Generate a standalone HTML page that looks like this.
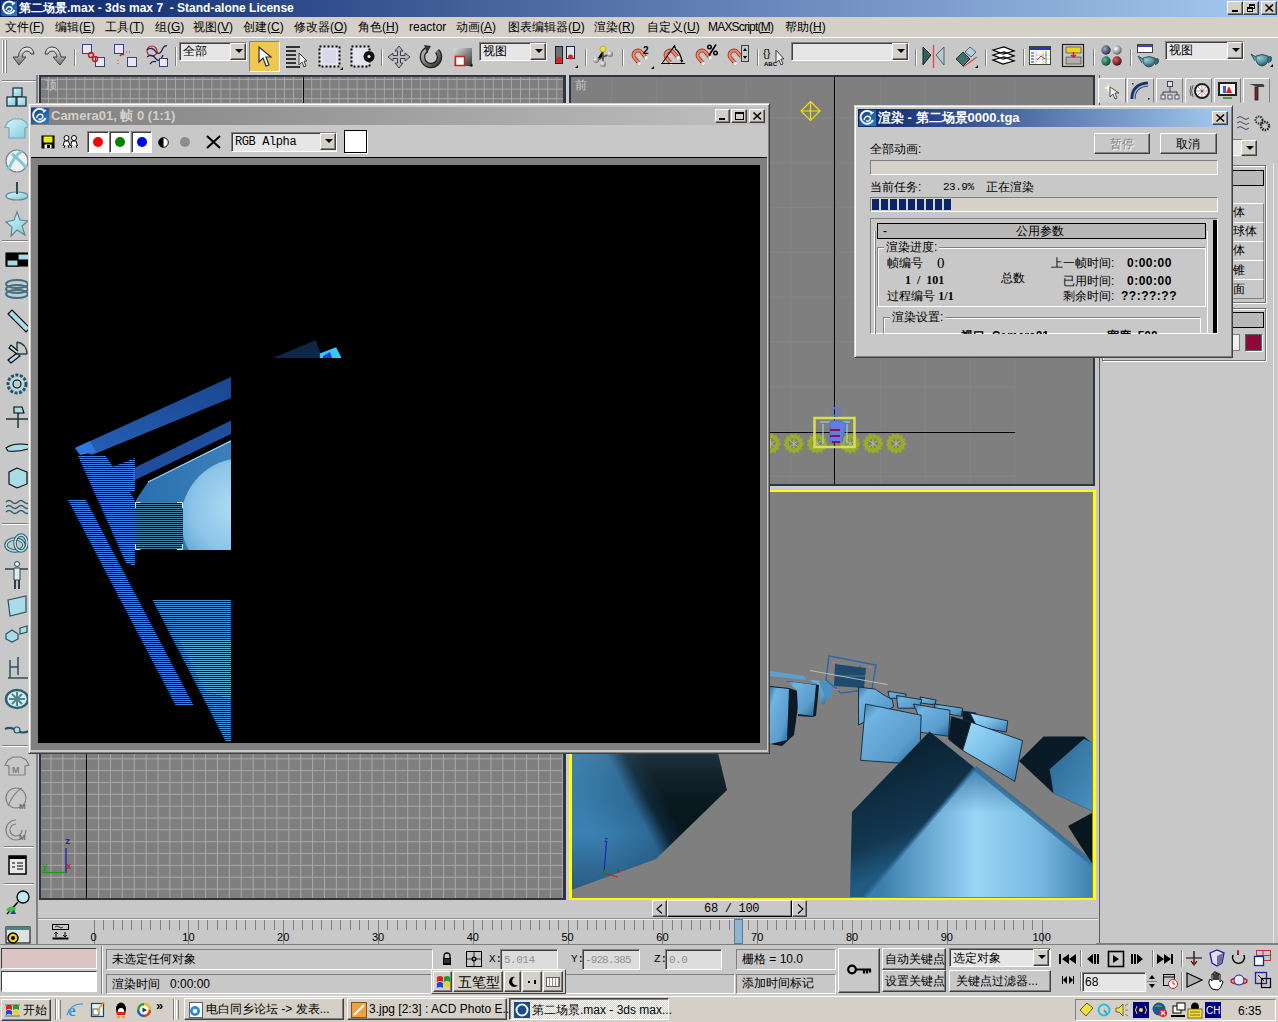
<!DOCTYPE html>
<html><head><meta charset="utf-8">
<style>
*{margin:0;padding:0;box-sizing:border-box}
html,body{width:1278px;height:1022px;overflow:hidden;background:#c8c8c8;font-family:"Liberation Sans",sans-serif;font-size:12px;color:#000}
.a{position:absolute}
svg{position:absolute;overflow:visible}
.t{position:absolute;white-space:nowrap;line-height:12px;font-size:12px}
.m{font-family:"Liberation Mono",monospace}
.grid9{background-color:#7f7f7f;background-image:linear-gradient(to right,#a8a8a8 1px,transparent 1px),linear-gradient(to bottom,#a8a8a8 1px,transparent 1px);background-size:9.08px 9.6px}
.grid12{background-color:#7f7f7f;background-image:linear-gradient(to right,#a8a8a8 1px,transparent 1px),linear-gradient(to bottom,#a8a8a8 1px,transparent 1px);background-size:11.9px 11.85px}
.btn{position:absolute;background:#d4d0c8;border:1px solid;border-color:#fff #404040 #404040 #fff;box-shadow:inset -1px -1px #808080}
.btnm{position:absolute;background:#c8c8c8;border:1px solid;border-color:#fff #404040 #404040 #fff;box-shadow:inset -1px -1px #808080}
.sunk{position:absolute;border:1px solid;border-color:#808080 #fff #fff #808080}
.sunk2{position:absolute;border:1px solid;border-color:#808080 #fff #fff #808080;box-shadow:inset 1px 1px #404040}
.sep{position:absolute;width:2px;border-left:1px solid #808080;border-right:1px solid #fff}
.dd{position:absolute;background:#e6e6e6;border:1px solid;border-color:#808080 #fff #fff #808080;box-shadow:inset 1px 1px #404040}
.dda{position:absolute;width:16px;background:#d4d0c8;border:1px solid;border-color:#fff #404040 #404040 #fff;box-shadow:inset -1px -1px #808080}
.dda:after{content:"";position:absolute;left:4px;top:5px;border-left:4px solid transparent;border-right:4px solid transparent;border-top:4px solid #000}
.grp{position:absolute;border:1px solid;border-color:#808080 #fff #fff #808080;box-shadow:1px 1px #fff inset}
</style></head><body>
<!-- title bar -->
<div class="a" style="left:0;top:0;width:1278px;height:17px;background:linear-gradient(to right,#0a246a,#a6caf0)"></div>
<svg style="left:1px;top:1px" width="16" height="15"><defs><linearGradient id="lg3" x1="0" y1="0" x2="1" y2="1"><stop offset="0" stop-color="#1a3a80"/><stop offset="1" stop-color="#2a80c0"/></linearGradient></defs><rect x="0" y="0" width="16" height="15" fill="url(#lg3)"/><path d="M12.5 2.5 A6 6 0 1 0 13.5 9" fill="none" stroke="#f0f8ff" stroke-width="2"/><path d="M11 4 L14 1.5" stroke="#f0f8ff" stroke-width="1.5"/><path d="M5 9 Q6 5 9.5 6 Q12 7 10 9.5 Q8 11 6.5 9.5" fill="none" stroke="#f0f8ff" stroke-width="1.4"/></svg>
<div class="t" style="left:19px;top:2px;color:#fff;font-weight:bold;font-size:12px;line-height:13px">第二场景.max - 3ds max 7 &nbsp;- Stand-alone License</div>
<div class="btn" style="left:1227px;top:1px;width:16px;height:14px"><div class="a" style="left:4px;top:8px;width:6px;height:2px;background:#000"></div></div>
<div class="btn" style="left:1243px;top:1px;width:16px;height:14px"><div class="a" style="left:5px;top:2px;width:6px;height:5px;border:1px solid #000;border-top-width:2px"></div><div class="a" style="left:3px;top:5px;width:6px;height:5px;border:1px solid #000;border-top-width:2px;background:#d4d0c8"></div></div>
<div class="btn" style="left:1261px;top:1px;width:16px;height:14px"><svg style="left:3px;top:2px" width="9" height="8"><path d="M0.5 0.5 L8 7.5 M8 0.5 L0.5 7.5" stroke="#000" stroke-width="1.6"/></svg></div>
<!-- menu bar -->
<div class="a" style="left:0;top:17px;width:1278px;height:20px;background:#d4d0c8"></div>
<div class="a" style="left:0;top:37px;width:1278px;height:1px;background:#fff"></div>
<div class="t" style="left:5px;top:21px">文件(<u>F</u>)</div>
<div class="t" style="left:55px;top:21px">编辑(<u>E</u>)</div>
<div class="t" style="left:105px;top:21px">工具(<u>T</u>)</div>
<div class="t" style="left:155px;top:21px">组(<u>G</u>)</div>
<div class="t" style="left:193px;top:21px">视图(<u>V</u>)</div>
<div class="t" style="left:243px;top:21px">创建(<u>C</u>)</div>
<div class="t" style="left:294px;top:21px">修改器(<u>O</u>)</div>
<div class="t" style="left:358px;top:21px">角色(<u>H</u>)</div>
<div class="t" style="left:409px;top:21px">reactor</div>
<div class="t" style="left:456px;top:21px">动画(<u>A</u>)</div>
<div class="t" style="left:508px;top:21px">图表编辑器(<u>D</u>)</div>
<div class="t" style="left:594px;top:21px">渲染(<u>R</u>)</div>
<div class="t" style="left:647px;top:21px">自定义(<u>U</u>)</div>
<div class="t" style="left:708px;top:21px;letter-spacing:-.8px">MAXScript(<u>M</u>)</div>
<div class="t" style="left:785px;top:21px">帮助(<u>H</u>)</div>
<!-- toolbar -->
<div class="a" style="left:0;top:38px;width:1278px;height:37px;background:#c8c8c8"></div>
<div class="a" style="left:2px;top:40px;width:2px;height:33px;border-left:1px solid #fff;border-right:1px solid #808080"></div>
<div class="a" style="left:5px;top:40px;width:2px;height:33px;border-left:1px solid #fff;border-right:1px solid #808080"></div>
<!-- undo/redo -->
<svg style="left:12px;top:45px" width="23" height="21"><defs><linearGradient id="gu" x1="0" y1="0" x2="0" y2="1"><stop offset="0" stop-color="#f0f0f0"/><stop offset="1" stop-color="#707070"/></linearGradient></defs><path d="M6 12 Q8 2 15 2 Q21 2 22 9 L19 9 Q18 6 15 6 Q11 6 10 12 L14 12 L7 20 L1 12 Z" fill="url(#gu)" stroke="#404040" stroke-width="1"/></svg>
<svg style="left:44px;top:45px" width="23" height="21"><path d="M17 12 Q15 2 8 2 Q2 2 1 9 L4 9 Q5 6 8 6 Q12 6 13 12 L9 12 L16 20 L22 12 Z" fill="url(#gu)" stroke="#404040" stroke-width="1"/></svg>
<div class="sep" style="left:74px;top:49px;height:17px"></div>
<!-- link -->
<svg style="left:82px;top:44px" width="24" height="24"><rect x="0.5" y="0.5" width="9" height="9" fill="#e8e8f4" stroke="#404080"/><rect x="13.5" y="13.5" width="9" height="9" fill="#e8e8f4" stroke="#404080"/><circle cx="9" cy="11" r="2.5" fill="none" stroke="#c02020" stroke-width="1.5"/><circle cx="13" cy="15" r="2.5" fill="none" stroke="#c02020" stroke-width="1.5"/></svg>
<svg style="left:114px;top:44px" width="24" height="24"><rect x="0.5" y="0.5" width="9" height="9" fill="#e8e8f4" stroke="#404080"/><rect x="13.5" y="13.5" width="9" height="9" fill="#e8e8f4" stroke="#404080"/><path d="M6 12 q2 -3 4 -1" fill="none" stroke="#c02020" stroke-width="1.5"/><path d="M12 8 h6 M4 16 v4" stroke="#c04040" stroke-dasharray="1 2"/></svg>
<svg style="left:146px;top:44px" width="24" height="24"><circle cx="6" cy="7" r="5" fill="none" stroke="#c02020" stroke-width="1.2"/><path d="M1 6 q5 -4 9 2 q4 4 7 -4 q2 -3 4 -2 M1 13 q5 -4 9 2 q4 4 7 -4 M4 20 q3 -4 6 -2" fill="none" stroke="#202060" stroke-width="1.3"/><rect x="13.5" y="14.5" width="8" height="8" fill="#e8e8f4" stroke="#404080"/></svg>
<div class="sep" style="left:175px;top:47px;height:19px"></div>
<!-- dropdown all -->
<div class="dd" style="left:179px;top:42px;width:68px;height:19px"><div class="t" style="left:3px;top:2px">全部</div></div>
<div class="dda" style="left:230px;top:43px;height:17px"></div>
<!-- select button -->
<div class="a" style="left:249px;top:41px;width:31px;height:31px;background:#f0c850;border:1px solid;border-color:#808080 #fff #fff #808080"></div>
<svg style="left:258px;top:46px" width="14" height="22"><path d="M1 1 L1 16 L5 12 L8 20 L11 19 L8 11 L13 11 Z" fill="#f4f4f4" stroke="#303030" stroke-width="1.2"/></svg>
<!-- select by name -->
<svg style="left:285px;top:45px" width="24" height="24"><path d="M1 2h14M1 6h10M1 10h10M1 14h10M1 18h10M1 22h14" stroke="#000" stroke-width="1.6"/><path d="M14 8 L14 20 L17 17 L19 22 L21 21 L19 16 L22 16Z" fill="#f0f0f0" stroke="#404040"/></svg>
<!-- rect select -->
<svg style="left:318px;top:45px" width="26" height="26"><rect x="1.5" y="1.5" width="20" height="20" fill="#e4e4ec" stroke="#000" stroke-width="2" stroke-dasharray="2 2"/><rect x="5" y="5" width="13" height="13" fill="#d8d8e8"/><path d="M25 25h-3l3-3z" fill="#000"/></svg>
<svg style="left:350px;top:45px" width="26" height="26"><rect x="1.5" y="1.5" width="18" height="20" fill="#e4e4ec" stroke="#000" stroke-width="2" stroke-dasharray="2 2"/><circle cx="19" cy="11.5" r="5.5" fill="#111"/><circle cx="19" cy="11.5" r="1.5" fill="#fff"/></svg>
<div class="sep" style="left:381px;top:49px;height:17px"></div>
<!-- move rotate scale -->
<svg style="left:387px;top:45px" width="24" height="24"><path d="M12 1 L16 6 H13.5 V10.5 H18 V8 L23 12 L18 16 V13.5 H13.5 V18 H16 L12 23 L8 18 H10.5 V13.5 H6 V16 L1 12 L6 8 V10.5 H10.5 V6 H8 Z" fill="#b8b8c0" stroke="#404048" stroke-width="1"/></svg>
<svg style="left:419px;top:44px" width="24" height="24"><defs><linearGradient id="rg" x1="0" y1="0" x2="1" y2="1"><stop offset="0" stop-color="#c0c0c0"/><stop offset="1" stop-color="#303030"/></linearGradient></defs><path d="M8 5.5 A8.5 8.5 0 1 0 18 7" fill="none" stroke="#202020" stroke-width="5.5"/><path d="M8 5.5 A8.5 8.5 0 1 0 18 7" fill="none" stroke="url(#rg)" stroke-width="3"/><path d="M5 1 L12 2 L8 9 Z" fill="#303030"/></svg>
<svg style="left:453px;top:47px" width="20" height="20"><defs><linearGradient id="gs" x1="0" y1="0" x2="1" y2="1"><stop offset="0" stop-color="#e0e0e0"/><stop offset="1" stop-color="#303030"/></linearGradient></defs><rect x="1" y="1" width="18" height="18" fill="url(#gs)"/><rect x="2.5" y="9.5" width="9" height="9" fill="#fff" stroke="#d02020" stroke-width="1.5"/><path d="M19.5 19.5h-3l3-3z" fill="#000"/></svg>
<!-- dropdown view -->
<div class="dd" style="left:479px;top:42px;width:68px;height:19px"><div class="t" style="left:3px;top:2px">视图</div></div>
<div class="dda" style="left:530px;top:43px;height:17px"></div>
<!-- pivot -->
<svg style="left:555px;top:45px" width="24" height="24"><rect x="0.5" y="1.5" width="7" height="17" fill="#707078" stroke="#202030"/><rect x="11.5" y="1.5" width="8" height="12" fill="#e0e0e8" stroke="#202060"/><circle cx="4" cy="15" r="3" fill="#e02020"/><circle cx="15.5" cy="12" r="2.5" fill="#e02020"/><path d="M23 23h-3l3-3z" fill="#000"/></svg>
<div class="sep" style="left:585px;top:49px;height:17px"></div>
<svg style="left:593px;top:45px" width="20" height="22"><defs><radialGradient id="mb" cx=".35" cy=".35" r=".7"><stop offset="0" stop-color="#fff"/><stop offset="1" stop-color="#707070"/></radialGradient></defs><path d="M10 5 V12 L3 16 M10 12 L17 9 M10 12 L10 19" stroke="#505050" stroke-width="1.6"/><circle cx="10" cy="4" r="3" fill="#f0e040" stroke="#a09000" stroke-width=".6"/><circle cx="3" cy="15" r="3" fill="url(#mb)"/><circle cx="17" cy="9" r="3" fill="url(#mb)"/><circle cx="10" cy="19" r="3" fill="url(#mb)"/></svg>
<div class="sep" style="left:622px;top:49px;height:17px"></div>
<!-- snaps -->
<svg style="left:629px;top:44px" width="26" height="26"><g transform="translate(9,11) rotate(-40)"><path d="M-4.5 7 V0 A4.5 4.5 0 0 1 4.5 0 V7" fill="none" stroke="#903828" stroke-width="3.8"/><path d="M-4.5 7 V0 A4.5 4.5 0 0 1 4.5 0 V7" fill="none" stroke="#f08868" stroke-width="2.2"/><rect x="-6" y="6" width="3" height="2.5" fill="#fff"/><rect x="3" y="6" width="3" height="2.5" fill="#fff"/></g><text x="14" y="10" font-size="10" font-weight="bold" font-family="Liberation Sans">2</text><path d="M25 25h-3l3-3z" fill="#000"/></svg>
<svg style="left:661px;top:44px" width="26" height="26"><g transform="translate(9,11) rotate(-40)"><path d="M-4.5 7 V0 A4.5 4.5 0 0 1 4.5 0 V7" fill="none" stroke="#903828" stroke-width="3.8"/><path d="M-4.5 7 V0 A4.5 4.5 0 0 1 4.5 0 V7" fill="none" stroke="#f08868" stroke-width="2.2"/><rect x="-6" y="6" width="3" height="2.5" fill="#fff"/><rect x="3" y="6" width="3" height="2.5" fill="#fff"/></g><path d="M0 19.5 H24 M1 19.5 L14 1 M14 4.5 Q20 9 21 18" fill="none" stroke="#000" stroke-width="1.1"/><path d="M12 3 l3 2 l-1 -4z M19 16 l3 0 l-1 3z" fill="#000"/></svg>
<svg style="left:693px;top:44px" width="26" height="26"><g transform="translate(9,11) rotate(-40)"><path d="M-4.5 7 V0 A4.5 4.5 0 0 1 4.5 0 V7" fill="none" stroke="#903828" stroke-width="3.8"/><path d="M-4.5 7 V0 A4.5 4.5 0 0 1 4.5 0 V7" fill="none" stroke="#f08868" stroke-width="2.2"/><rect x="-6" y="6" width="3" height="2.5" fill="#fff"/><rect x="3" y="6" width="3" height="2.5" fill="#fff"/></g><circle cx="16.5" cy="3" r="1.8" fill="none" stroke="#000" stroke-width="1.4"/><circle cx="22.5" cy="9" r="1.8" fill="none" stroke="#000" stroke-width="1.4"/><path d="M23 0.5 L16 11.5" stroke="#000" stroke-width="1.6"/></svg>
<svg style="left:725px;top:44px" width="26" height="26"><g transform="translate(9,11) rotate(-40)"><path d="M-4.5 7 V0 A4.5 4.5 0 0 1 4.5 0 V7" fill="none" stroke="#903828" stroke-width="3.8"/><path d="M-4.5 7 V0 A4.5 4.5 0 0 1 4.5 0 V7" fill="none" stroke="#f08868" stroke-width="2.2"/><rect x="-6" y="6" width="3" height="2.5" fill="#fff"/><rect x="3" y="6" width="3" height="2.5" fill="#fff"/></g><rect x="16.5" y="1.5" width="7" height="16" fill="#c8c8c8" stroke="#404040"/><path d="M18 7l2-3 2 3zM18 12l2 3 2-3z" fill="#000"/></svg>
<div class="sep" style="left:757px;top:49px;height:17px"></div>
<svg style="left:763px;top:45px" width="28" height="24"><text x="0" y="12" font-size="11" font-family="Liberation Sans">{}</text><text x="1" y="21" font-size="6" font-weight="bold" font-family="Liberation Sans">ABC</text><path d="M13 5 L13 18 L16 15 L18 20 L20 19 L18 14 L21 14Z" fill="#f0f0f0" stroke="#404040"/></svg>
<div class="dd" style="left:791px;top:42px;width:118px;height:19px"></div>
<div class="dda" style="left:892px;top:43px;height:17px"></div>
<div class="sep" style="left:915px;top:49px;height:17px"></div>
<!-- mirror align -->
<svg style="left:922px;top:45px" width="24" height="24"><path d="M1 2 L9 10 L1 20 Z" fill="#306060" stroke="#102020"/><path d="M22 2 L14 10 L22 20 Z" fill="#b8c8d0" stroke="#506070"/><path d="M11.5 0 V23" stroke="#e05050" stroke-width="1.5"/></svg>
<svg style="left:955px;top:45px" width="24" height="24"><path d="M1 14 L8 7 L15 14 L8 21Z" fill="#407070" stroke="#203030"/><path d="M10 7 L15 2 L21 7 L16 12Z" fill="#b8d0e0" stroke="#506070"/><path d="M8 22 L22 12" stroke="#e05050" stroke-width="1.5"/><path d="M23 23h-3l3-3z" fill="#000"/></svg>
<div class="sep" style="left:985px;top:49px;height:17px"></div>
<svg style="left:992px;top:46px" width="24" height="20"><path d="M1 4 L12 1 L22 5 L11 8Z M1 9 L12 6 L22 10 L11 13Z M1 14 L12 11 L22 15 L11 18Z" fill="#fff" stroke="#000" stroke-width="1.2"/></svg>
<div class="sep" style="left:1023px;top:49px;height:17px"></div>
<svg style="left:1029px;top:46px" width="23" height="20"><rect x="0.5" y="0.5" width="21" height="18" fill="#fff" stroke="#404040"/><rect x="1" y="1" width="21" height="3" fill="#3030c0"/><path d="M2 7h3M2 10h3M2 13h3M2 16h3" stroke="#2020a0"/><path d="M7 5v13M14 5v13M7 9h14M7 13h14" stroke="#a0a0a0" stroke-width=".6"/><path d="M8 14 l4 -4 l4 3" fill="none" stroke="#c03030"/><path d="M17 5v13" stroke="#40a040"/></svg>
<svg style="left:1062px;top:44px" width="23" height="24"><rect x="0.5" y="0.5" width="21" height="22" fill="#c8c8c8" stroke="#202020" stroke-width="1.2"/><rect x="4" y="3" width="15" height="6" fill="#f0d020" stroke="#303030" stroke-width=".6"/><rect x="4" y="13" width="15" height="7" fill="#b0b0b0" stroke="#303030" stroke-width=".6"/><path d="M11.5 8v5M9 11l2.5 2 2.5-2" stroke="#d02020" stroke-width="1.5" fill="none"/></svg>
<div class="sep" style="left:1093px;top:49px;height:17px"></div>
<svg style="left:1101px;top:45px" width="21" height="21"><defs><radialGradient id="b1" cx=".35" cy=".35" r=".7"><stop offset="0" stop-color="#a0a8d0"/><stop offset="1" stop-color="#202840"/></radialGradient><radialGradient id="b2" cx=".35" cy=".35" r=".7"><stop offset="0" stop-color="#fff"/><stop offset="1" stop-color="#606060"/></radialGradient><radialGradient id="b3" cx=".35" cy=".35" r=".7"><stop offset="0" stop-color="#60c0a0"/><stop offset="1" stop-color="#104030"/></radialGradient><radialGradient id="b4" cx=".35" cy=".35" r=".7"><stop offset="0" stop-color="#e06060"/><stop offset="1" stop-color="#401010"/></radialGradient></defs><circle cx="5" cy="5" r="4.7" fill="url(#b1)"/><circle cx="16" cy="5" r="4.7" fill="url(#b2)"/><circle cx="5" cy="16" r="4.7" fill="url(#b3)"/><circle cx="16" cy="16" r="4.7" fill="url(#b4)"/></svg>
<div class="sep" style="left:1130px;top:49px;height:17px"></div>
<svg style="left:1137px;top:44px" width="24" height="24"><rect x="0.5" y="0.5" width="15" height="8" fill="#fff" stroke="#404040"/><rect x="1" y="1" width="14" height="2" fill="#4040d0"/><defs><radialGradient id="tp" cx=".4" cy=".35" r=".7"><stop offset="0" stop-color="#90d0d8"/><stop offset="1" stop-color="#205060"/></radialGradient></defs><path d="M6 14 Q5 22 12 23 Q19 22 18 14 Q12 11 6 14Z M18 15 q5 -2 3 4 l-3 2 M6 15 l-5 -3 l4 7" fill="url(#tp)" stroke="#204050" stroke-width=".8"/></svg>
<div class="dd" style="left:1165px;top:41px;width:79px;height:19px"><div class="t" style="left:3px;top:2px">视图</div></div>
<div class="dda" style="left:1227px;top:42px;height:17px"></div>
<svg style="left:1250px;top:52px" width="24" height="16"><path d="M6 4 Q5 13 12 14 Q19 13 18 4 Q12 1 6 4Z M18 5 q5 -2 3 4 l-3 2 M6 5 l-5 -3 l4 7" fill="url(#tp)" stroke="#204050" stroke-width=".8"/><path d="M23 15h-3l3-3z" fill="#000"/></svg>
<!-- viewport area -->
<div class="a" style="left:37px;top:75px;width:1px;height:870px;background:#808080"></div>
<!-- left tab panel -->
<div class="a" style="left:0;top:75px;width:37px;height:870px;background:#c8c8c8;border-right:1px solid #808080"></div>
<!-- top viewport -->
<div class="a" style="left:39px;top:75px;width:527px;height:40px;background:#2e3540"></div>
<div class="a grid9" style="left:41px;top:77px;width:522px;height:38px;background-position:7px 2px"></div>
<div class="a" style="left:303px;top:77px;width:1px;height:30px;background:#000"></div>
<div class="t" style="left:45px;top:79px;color:#c8c8c8;font-size:12px">顶</div>
<!-- front viewport -->
<div class="a" style="left:569px;top:75px;width:526px;height:411px;background:#2e3540"></div>
<div class="a" style="left:571px;top:77px;width:522px;height:407px;background:#7f7f7f"></div>
<div class="a" style="left:571px;top:77px;width:444px;height:407px;background-image:linear-gradient(to right,rgba(150,150,150,.25) 1px,transparent 1px),linear-gradient(to bottom,rgba(150,150,150,.25) 1px,transparent 1px);background-size:44.8px 44.8px;background-position:40px 40.5px"></div>
<div class="t" style="left:575px;top:79px;color:#c8c8c8">前</div>
<div class="a" style="left:834px;top:77px;width:1px;height:407px;background:#000"></div>
<div class="a" style="left:571px;top:432px;width:444px;height:1px;background:#000"></div>
<svg style="left:800px;top:100px" width="22" height="22"><path d="M10.5 1.5 L20 11 L10.5 20.5 L1 11 Z M1 11 H20 M10.5 1.5 V20.5" fill="none" stroke="#f0e000" stroke-width="1.2"/></svg>
<svg style="left:760px;top:400px" width="150" height="60"><circle cx="10.6" cy="43.5" r="7" fill="none" stroke="#9aac28" stroke-width="4"/><circle cx="10.6" cy="43.5" r="9.3" fill="none" stroke="#9aac28" stroke-width="1.6" stroke-dasharray="2.2 2.2"/><path d="M6.6 40.5 l8 6 M10.6 39 v9 M6.6 47 l8 -6" stroke="#b8c860" stroke-width="1"/><circle cx="33.8" cy="43.5" r="7" fill="none" stroke="#9aac28" stroke-width="4"/><circle cx="33.8" cy="43.5" r="9.3" fill="none" stroke="#9aac28" stroke-width="1.6" stroke-dasharray="2.2 2.2"/><path d="M29.799999999999997 40.5 l8 6 M33.8 39 v9 M29.799999999999997 47 l8 -6" stroke="#b8c860" stroke-width="1"/><circle cx="57" cy="43.5" r="7" fill="none" stroke="#9aac28" stroke-width="4"/><circle cx="57" cy="43.5" r="9.3" fill="none" stroke="#9aac28" stroke-width="1.6" stroke-dasharray="2.2 2.2"/><path d="M53 40.5 l8 6 M57 39 v9 M53 47 l8 -6" stroke="#b8c860" stroke-width="1"/><circle cx="90" cy="43.5" r="7" fill="none" stroke="#9aac28" stroke-width="4"/><circle cx="90" cy="43.5" r="9.3" fill="none" stroke="#9aac28" stroke-width="1.6" stroke-dasharray="2.2 2.2"/><path d="M86 40.5 l8 6 M90 39 v9 M86 47 l8 -6" stroke="#b8c860" stroke-width="1"/><circle cx="113" cy="43.5" r="7" fill="none" stroke="#9aac28" stroke-width="4"/><circle cx="113" cy="43.5" r="9.3" fill="none" stroke="#9aac28" stroke-width="1.6" stroke-dasharray="2.2 2.2"/><path d="M109 40.5 l8 6 M113 39 v9 M109 47 l8 -6" stroke="#b8c860" stroke-width="1"/><circle cx="136" cy="43.5" r="7" fill="none" stroke="#9aac28" stroke-width="4"/><circle cx="136" cy="43.5" r="9.3" fill="none" stroke="#9aac28" stroke-width="1.6" stroke-dasharray="2.2 2.2"/><path d="M132 40.5 l8 6 M136 39 v9 M132 47 l8 -6" stroke="#b8c860" stroke-width="1"/><rect x="54.5" y="18" width="40" height="29" fill="none" stroke="#d4e050" stroke-width="2.5"/><path d="M60 22 H90 M63 24 v20 M87 24 v20" stroke="#a0e0f0" stroke-width="1" fill="none"/><path d="M70 22 q8 -4 16 2 l-4 18 h-12 z" fill="#6080e0" stroke="#5070d0"/><circle cx="76" cy="12" r="4" fill="none" stroke="#5a7ad8" stroke-width="2"/><path d="M70 30h10M70 36h10M72 42h8" stroke="#901060" stroke-width="2"/></svg>
<!-- bottom-left viewport -->
<div class="a" style="left:39px;top:750px;width:527px;height:150px;background:#2e3540"></div>
<div class="a grid12" style="left:41px;top:750px;width:522px;height:148px;background-position:9.5px 8.3px"></div>
<div class="a" style="left:86px;top:750px;width:1px;height:148px;background:#000"></div>
<svg style="left:40px;top:833px" width="40" height="45"><path d="M26 15 V40" stroke="#2020c0" stroke-width="1.3"/><path d="M2 39.5 H26" stroke="#10a010" stroke-width="1.3"/><text x="25" y="11" font-size="9" font-weight="bold" fill="#2020c0" font-family="Liberation Mono">z</text><text x="2" y="36" font-size="9" font-weight="bold" fill="#10a010" font-family="Liberation Mono">y</text><text x="26" y="36" font-size="9" font-weight="bold" fill="#c02040" font-family="Liberation Mono">x</text></svg>
<!-- separators -->
<div class="a" style="left:566px;top:75px;width:3px;height:826px;background:#c8ccd4"></div>
<!-- perspective viewport -->
<div class="a" style="left:569px;top:490px;width:527px;height:410px;background:#ffff00"></div>
<div class="a" style="left:572px;top:492px;width:521px;height:406px;background:#7f7f7f;overflow:hidden">
<svg style="left:-572px;top:-492px" width="1278" height="1022">
<defs>
<linearGradient id="cL" gradientUnits="userSpaceOnUse" x1="590" y1="825" x2="660" y2="788"><stop offset="0" stop-color="#3a82b4"/><stop offset=".6" stop-color="#2d6c9a"/><stop offset=".8" stop-color="#0e2636"/><stop offset="1" stop-color="#08161e"/></linearGradient>
<linearGradient id="cD" gradientUnits="userSpaceOnUse" x1="880" y1="760" x2="920" y2="860"><stop offset="0" stop-color="#0b2333"/><stop offset=".7" stop-color="#133852"/><stop offset="1" stop-color="#215a80"/></linearGradient>
<linearGradient id="cH" gradientUnits="userSpaceOnUse" x1="880" y1="880" x2="1092" y2="880"><stop offset="0" stop-color="#3a7cac"/><stop offset=".45" stop-color="#98d6f6"/><stop offset=".75" stop-color="#78b8e0"/><stop offset="1" stop-color="#3f80b0"/></linearGradient>
<linearGradient id="cHv" gradientUnits="userSpaceOnUse" x1="0" y1="768" x2="0" y2="896"><stop offset="0" stop-color="#3a78a8" stop-opacity=".9"/><stop offset=".35" stop-color="#3a78a8" stop-opacity="0"/></linearGradient>
<linearGradient id="cM" x1="0" y1="0" x2="1" y2="1"><stop offset="0" stop-color="#3a78a8"/><stop offset=".2" stop-color="#70b4e2"/><stop offset=".7" stop-color="#5a9ccc"/><stop offset="1" stop-color="#2a6490"/></linearGradient>
<linearGradient id="cM2" x1="0" y1="0" x2="1" y2="1"><stop offset="0" stop-color="#a0dcfa"/><stop offset=".5" stop-color="#78bce6"/><stop offset="1" stop-color="#3a7cb0"/></linearGradient>
<linearGradient id="cS" gradientUnits="userSpaceOnUse" x1="1020" y1="760" x2="1092" y2="760"><stop offset="0" stop-color="#08161e"/><stop offset=".45" stop-color="#0e2634"/><stop offset=".55" stop-color="#2e6e9c"/><stop offset="1" stop-color="#4a90c0"/></linearGradient>
<linearGradient id="cS2" x1="0" y1="0" x2="1" y2="1"><stop offset="0" stop-color="#2a6690"/><stop offset="1" stop-color="#4a90c0"/></linearGradient>
</defs>
<!-- bottom left big cube -->
<polygon points="571,745 716,745 727,790 656,859 571,890" fill="url(#cL)"/><linearGradient id="cLv" x1="0" y1="0" x2="0" y2="1"><stop offset="0" stop-color="#9ad0f0" stop-opacity=".18"/><stop offset=".6" stop-color="#000" stop-opacity="0"/><stop offset="1" stop-color="#000" stop-opacity=".3"/></linearGradient><polygon points="571,745 716,745 727,790 656,859 571,890" fill="url(#cLv)"/>
<!-- far left row -->
<polygon points="770,671 804,676 806,680 770,676" fill="#5aa0d0"/>
<polygon points="770,686 789,688 800,692 794,735 782,746 770,744" fill="#0a1a26"/>
<polygon points="770,687 789,689 787,740 770,744" fill="url(#cM)"/>
<polygon points="786,681 819,685 816,716 812,717 798,716 798,688" fill="#0c1e2a"/>
<polygon points="786,681 816,685 813,716 798,714 797,690" fill="url(#cM)"/>
<polygon points="806,679 828,682 825,704 820,705 819,685" fill="url(#cM)"/>
<polygon points="819,681 834,683 831,697 826,699" fill="#4a90c0"/>
<!-- camera box -->
<polygon points="829,656 876,665 872,689 841,693 826,680" fill="none" stroke="#2e68a8" stroke-width="1.5"/><path d="M836,661 V690 M860,665 V692" stroke="#2e68a8" stroke-width="1"/>
<polygon points="835,664 866,668 864,688 834,686" fill="#1e4a6c"/><path d="M834,676 H866" stroke="#6aa0d0" stroke-width="1" opacity=".6"/><path d="M832,663 l5,-1 M868,666 l4,2 M834,689 l5,1" stroke="#e07080" stroke-width="1.2"/>
<path d="M810 670.5 L887.5 684.6" stroke="#c8c0a8" stroke-width=".9"/>
<!-- middle row cubes -->
<g stroke="#102838" stroke-width="0.9" stroke-linejoin="round">
<polygon points="888,691.3 906.3,694.1 904.9,698.3 889.4,698.3" fill="url(#cM)"/>
<polygon points="920,697 936,700 935,705 921,703" fill="url(#cM)"/>
<polygon points="896.5,695.5 921.8,699.7 919,708.2 897.9,708.2" fill="url(#cM)"/>
<polygon points="934.5,704 962.7,708.2 961.3,716.6 948.6,713.8 935,712" fill="url(#cM)"/>
<polygon points="858.5,687 875.4,689.2 882.4,694.1 892.3,699.7 893.7,706.8 858.5,725" fill="url(#cM)"/>
<polygon points="962,711 976,713 975,727 964,724" fill="#0a1a26"/>
<polygon points="970,713 1007.7,720.8 1006.3,732.1 976.8,726.5" fill="url(#cM2)"/>
<polygon points="913.4,704 950,710.3 948.6,736.3 919,732.1 917.6,713.8" fill="url(#cM)"/>
<polygon points="865.5,704 921.1,715.2 919.7,764.5 860.6,760.3" fill="url(#cM)"/>
<polygon points="951.4,716.6 971.1,722.3 962.7,750.4 948.6,739.2" fill="#0a1a26"/>
<polygon points="971.1,722.3 1022.5,740.6 1014.8,781.4 962.7,750.4" fill="url(#cM2)"/>
</g>
<!-- big front cube -->
<polygon points="929.5,731.5 852,812 850,897 1092,897 1092,863 975,768" fill="url(#cH)"/>
<polygon points="929.5,731.5 852,812 850,897 1092,897 1092,863 975,768" fill="url(#cHv)"/>
<polygon points="929.5,731.5 852,812 850,897 864,897 975,768" fill="url(#cD)"/>
<path d="M975,768 L1092,863" stroke="#2f6c98" stroke-width="5" opacity=".8"/>
<path d="M975,768 L864,897" stroke="#2a6690" stroke-width="4" opacity=".6"/>
<!-- right partial cubes -->
<polygon points="1019,761 1043.5,736.6 1084,736.6 1092,743 1092,811 1053.6,793.6" fill="#0a1a26"/><polygon points="1049.6,769.2 1084.2,738.7 1092.3,742.7 1092.3,810.9 1053.6,793.6" fill="url(#cS2)"/>
<polygon points="1068,826 1092,813 1092,863 1078,842" fill="#08161e"/>
</svg>
<svg style="left:22px;top:346px" width="45" height="45"><path d="M12.5 3 L10 35" stroke="#2020c0" stroke-width="1.2"/><path d="M10 35 L24 39" stroke="#d02020" stroke-width="1.2"/><path d="M10 35 L13 29" stroke="#10a010" stroke-width="1.2"/><text x="10" y="4" font-size="7" fill="#2020c0" font-family="Liberation Mono">z</text><text x="23" y="35" font-size="7" fill="#d02020" font-family="Liberation Mono">x</text></svg>
</div>
<div class="a" style="left:566px;top:486px;width:530px;height:4px;background:#c8ccd4"></div>
<div class="a" style="left:1095px;top:75px;width:4px;height:415px;background:#c8c8c8"></div>
<div class="a" style="left:1099px;top:75px;width:1px;height:870px;background:#5a5a5a"></div>
<!-- left tab panel icons -->
<div class="a" style="left:2px;top:80px;width:34px;height:2px;border-top:1px solid #808080;border-bottom:1px solid #fff"></div>
<svg style="left:0;top:82px" width="38" height="870">
<defs><linearGradient id="cy" x1="0" y1="0" x2="1" y2="1"><stop offset="0" stop-color="#d8f8ff"/><stop offset="1" stop-color="#80c8d8"/></linearGradient></defs>
<g stroke="#1a2a30" stroke-width="1.2" fill="url(#cy)">
<!-- cubes 98 -->
<rect x="13" y="6" width="9" height="9"/><rect x="7" y="15" width="9" height="9"/><rect x="17" y="15" width="9" height="9"/>
<!-- tshirt 130 -->
<path d="M8 40 l5 -3 h8 l5 3 l3 5 l-4 1 v10 h-16 v-10 l-4 -1z" stroke="#70a8b8"/>
<!-- ball 161 -->
<circle cx="17" cy="79" r="11" fill="#f0f0f0" stroke="#708890"/><path d="M8 88 Q14 74 22 69 M12 72 Q22 80 26 86" stroke="#80c8d8" stroke-width="3" fill="none"/>
<!-- spin top 192 -->
<ellipse cx="17" cy="114" rx="11" ry="4" stroke="#608890"/><path d="M17 100 v12" stroke="#304850" stroke-width="2"/>
<!-- star 223 -->
<path d="M17 130 l3 8 l8 1 l-6 5 l3 9 l-8 -5 l-6 6 l1 -9 l-6 -5 l8 -2z" stroke="#608890"/>
</g>
<path d="M2 158.5 H34" stroke="#808080"/><path d="M2 159.5 H34" stroke="#fff"/>
<g stroke="#000" stroke-width="1.1" fill="#a8dce8">
<!-- checker 260 -->
<rect x="6" y="171" width="24" height="13" fill="#000"/><rect x="7" y="178" width="11" height="6"/><rect x="18" y="172" width="11" height="6"/>
<!-- spring 290 -->
<ellipse cx="17" cy="202" rx="11" ry="4" fill="none" stroke="#407080" stroke-width="2"/><ellipse cx="17" cy="207" rx="11" ry="4" fill="none" stroke="#407080" stroke-width="2"/><ellipse cx="17" cy="212" rx="11" ry="4" fill="none" stroke="#407080" stroke-width="2"/>
<!-- pen 322 -->
<path d="M8 232 l4 -4 l18 18 l-4 4z"/>
<!-- fan 353 -->
<path d="M8 278 l9 -7 l3 3 l-9 7z"/><path d="M17 260 v12 h10 M17 260 q10 2 10 12" fill="none" stroke="#304048" stroke-width="1.5"/><path d="M17 272 l-8 -6 l2 -3 l7 6" fill="#a8dce8"/>
<!-- gear 384 -->
<circle cx="17" cy="302" r="9" stroke-width="3" stroke="#305060" stroke-dasharray="3 1.5"/><circle cx="17" cy="302" r="4" fill="#c8c8c8"/>
<!-- wind 415 -->
<path d="M6 337 h24 M18 328 v18" fill="none" stroke="#203038" stroke-width="1.5"/><path d="M14 325 h8 l2 6 h-10z"/>
<!-- car 446 -->
<path d="M6 366 q8 -6 24 -3 l-2 4 q-10 3 -20 2z"/>
<!-- box 477 -->
<path d="M9 390 l8 -4 l10 4 v12 l-10 4 l-8 -4z"/>
<!-- waves 508 -->
<path d="M6 420 q3 -3 6 0 t6 0 t6 0 t6 0 M6 425 q3 -3 6 0 t6 0 t6 0 t6 0 M6 430 q3 -3 6 0 t6 0 t6 0 t6 0" fill="none" stroke="#306070" stroke-width="1.5"/>
</g>
<path d="M2 441.5 H34" stroke="#808080"/><path d="M2 442.5 H34" stroke="#fff"/>
<g stroke="#305060" stroke-width="1.2" fill="#a8dce8">
<!-- knot 545 -->
<ellipse cx="15" cy="463" rx="9" ry="6" fill="none" stroke="#306070" stroke-width="3.5"/><ellipse cx="15" cy="463" rx="9" ry="6" fill="none" stroke="#b8e4ec" stroke-width="1.5"/><ellipse cx="21" cy="461" rx="6" ry="8" fill="none" stroke="#306070" stroke-width="3.5"/><ellipse cx="21" cy="461" rx="6" ry="8" fill="none" stroke="#b8e4ec" stroke-width="1.5"/>
<!-- figure 575 -->
<circle cx="17" cy="482" r="2.5" fill="#e8f4f8" stroke="#304048" stroke-width="1"/><path d="M5 487 h24" stroke="#304048" stroke-width="1.5"/><path d="M14 486 h6 v12 h-6z" fill="#d8eef4" stroke="#304048" stroke-width="1"/><path d="M15 498 v9 M19 498 v9" stroke="#304048" stroke-width="2"/>
<!-- page 606 -->
<path d="M8 518 l18 -4 v16 l-16 4z"/>
<!-- cubes 637 -->
<path d="M6 552 l6 -4 l6 4 v5 l-6 3 l-6 -3z M20 546 l7 -2 v6 l-7 2z"/>
<!-- ladder 668 -->
<path d="M10 578 v18 M18 575 v18 M10 585 h8 M8 596 h20" fill="none" stroke-width="1.5"/>
<!-- wheel 700 -->
<ellipse cx="17" cy="617" rx="11" ry="9" fill="#d0eef4" stroke="#306070" stroke-width="2.5"/><path d="M17 610 v14 M9 617 h16 M12 612 l10 10 M22 612 l-10 10" stroke="#508890" stroke-width="2"/>
<!-- rope 731 -->
<path d="M5 647 q6 -3 12 2 q6 3 12 0" fill="none" stroke-width="2"/><circle cx="17" cy="648" r="3"/>
</g>
<path d="M2 663.5 H34" stroke="#808080"/><path d="M2 664.5 H34" stroke="#fff"/>
<g stroke="#808080" stroke-width="1.2" fill="none">
<path d="M8 678 l5 -3 h8 l5 3 l3 5 l-4 1 v9 h-16 v-9 l-4 -1z"/><text x="12" y="691" font-size="9" font-weight="bold" fill="#808080" stroke="none" font-family="Liberation Sans">M</text>
<circle cx="16" cy="716" r="10"/><path d="M8 724 Q14 710 22 706"/><text x="19" y="727" font-size="8" font-weight="bold" fill="#707070" stroke="none" font-family="Liberation Sans">M</text>
<path d="M16 738 a10 10 0 1 0 10 10 M16 742 a6 6 0 1 0 6 6"/><text x="19" y="758" font-size="8" font-weight="bold" fill="#707070" stroke="none" font-family="Liberation Sans">M</text>
</g>
<path d="M4 764.5 H34" stroke="#808080"/><path d="M4 765.5 H34" stroke="#fff"/>
<rect x="9" y="774" width="17" height="18" fill="#e8e8e8" stroke="#000" stroke-width="1.5"/><rect x="9" y="774" width="17" height="3" fill="#000"/><path d="M12 781h3M12 785h3M17 781h6M17 784h6M17 787h6" stroke="#000"/>
<path d="M4 801.5 H34" stroke="#808080"/><path d="M4 802.5 H34" stroke="#fff"/>
<circle cx="23" cy="815" r="6" fill="#c0e8f0" stroke="#000" stroke-width="1.3"/><path d="M18 820 L7 832" stroke="#000" stroke-width="1.5"/><path d="M6 828 q4 -6 10 -2 l-2 6z" fill="#40c040"/><path d="M10 832 l4 -4 l2 4z" fill="#2040a0"/>
<rect x="6" y="845" width="24" height="16" fill="#e0e0e0" stroke="#000"/><rect x="6" y="845" width="24" height="3" fill="#508080"/><circle cx="13" cy="856" r="5" fill="#f0d020" stroke="#000" stroke-width="1.5"/><circle cx="13" cy="856" r="2" fill="#000"/>
</svg>
<!-- right command panel -->
<div class="a" style="left:1100px;top:75px;width:178px;height:870px;background:#c8c8c8"></div>
<div class="a" style="left:1098px;top:78px;width:28px;height:25px;background:#d0d0d0;border:1px solid;border-color:#fff #808080 #c8c8c8 #fff"></div>
<div class="a" style="left:1127px;top:78px;width:27px;height:25px;border:1px solid;border-color:#fff #808080 #c8c8c8 #fff"></div>
<div class="a" style="left:1156px;top:78px;width:27px;height:25px;border:1px solid;border-color:#fff #808080 #c8c8c8 #fff"></div>
<div class="a" style="left:1185px;top:78px;width:27px;height:25px;border:1px solid;border-color:#fff #808080 #c8c8c8 #fff"></div>
<div class="a" style="left:1214px;top:78px;width:27px;height:25px;border:1px solid;border-color:#fff #808080 #c8c8c8 #fff"></div>
<div class="a" style="left:1243px;top:78px;width:27px;height:25px;border:1px solid;border-color:#fff #808080 #c8c8c8 #fff"></div>
<svg style="left:1104px;top:82px" width="20" height="18"><path d="M4 1 l1 4 l4 1 l-4 1 l-1 4 l-1 -4 l-4 -1 l4 -1z" fill="#fff8d0"/><path d="M6 5 L6 15 L9 12 L11 17 L13 16 L11 11 L15 11Z" fill="#f0f0f0" stroke="#303030" stroke-width=".8"/></svg>
<svg style="left:1131px;top:82px" width="20" height="18"><path d="M2 17 Q2 3 17 2" fill="none" stroke="#203060" stroke-width="5"/><path d="M3 17 Q3 4 17 3" fill="none" stroke="#a0b0e0" stroke-width="1.5"/><rect x="1" y="1" width="1.5" height="1.5" fill="#000"/><rect x="17" y="16" width="1.5" height="1.5" fill="#000"/></svg>
<svg style="left:1160px;top:81px" width="20" height="20"><rect x="7.5" y="0.5" width="5" height="5" fill="#e0e0f0" stroke="#404060"/><path d="M10 6v5M3 14v-3h14v3" fill="none" stroke="#404040"/><rect x="1" y="14" width="4" height="4" fill="#e0e0f0" stroke="#404060" stroke-width=".8"/><rect x="8" y="14" width="4" height="4" fill="#e0e0f0" stroke="#404060" stroke-width=".8"/><rect x="15" y="14" width="4" height="4" fill="#e0e0f0" stroke="#404060" stroke-width=".8"/></svg>
<svg style="left:1189px;top:82px" width="22" height="18"><circle cx="13" cy="9" r="7" fill="#fff" stroke="#202020" stroke-width="2"/><path d="M13 3v12M7 9h12M9 5l8 8M17 5l-8 8" stroke="#808080" stroke-width=".7"/><circle cx="13" cy="9" r="1.2" fill="#e02020"/><path d="M4 3 q-3 6 0 12 M2 4 q-2 5 0 10" fill="none" stroke="#404040" stroke-width=".8"/></svg>
<svg style="left:1217px;top:81px" width="22" height="20"><rect x="1" y="1" width="19" height="14" fill="#202020"/><rect x="3" y="3" width="15" height="10" fill="#f4f4f4"/><path d="M9 12 l3 -7 l3 7z" fill="#e02020"/><rect x="6" y="5" width="3" height="7" fill="#4060c0"/><rect x="6" y="16" width="9" height="2" fill="#40a040"/></svg>
<svg style="left:1247px;top:81px" width="20" height="20"><path d="M2 3 h14 q2 1 1 3 h-6 v0z" fill="#404040"/><rect x="8" y="6" width="3" height="13" fill="#802020" stroke="#202020" stroke-width=".8"/></svg>
<!-- rest of right panel visible parts -->
<svg style="left:1236px;top:114px" width="40" height="18"><path d="M1 4 q3 -3 6 0 t6 0 M1 9 q3 -3 6 0 t6 0 M1 14 q3 -3 6 0 t6 0" fill="none" stroke="#404870" stroke-width="1"/><circle cx="23" cy="6" r="3.5" fill="none" stroke="#303030" stroke-width="2" stroke-dasharray="1.5 1"/><circle cx="29" cy="12" r="4" fill="none" stroke="#202020" stroke-width="2.5" stroke-dasharray="1.5 1"/></svg>
<div class="a" style="left:1233px;top:139px;width:9px;height:17px;background:#e6e6e6;border-top:1px solid #808080;border-bottom:1px solid #fff"></div>
<div class="dda" style="left:1241px;top:140px;height:16px"></div>
<div class="a" style="left:1273px;top:163px;width:1px;height:780px;background:#ececec"></div>
<div class="a" style="left:1102px;top:165px;width:165px;height:139px;border:1px solid;border-color:#707070 #fff #fff #707070;box-shadow:inset -1px -1px #707070,inset 1px 1px #fff"></div>
<div class="a" style="left:1233px;top:170px;width:31px;height:16px;background:#b8b8b8;border:1px solid #000;border-left:none"></div>
<div class="t" style="left:1233px;top:206px">体</div>
<div class="t" style="left:1233px;top:225px">球体</div>
<div class="t" style="left:1233px;top:244px">体</div>
<div class="t" style="left:1233px;top:264px">锥</div>
<div class="t" style="left:1233px;top:283px">面</div>
<div class="a" style="left:1233px;top:203px;width:31px;height:20px;border:1px solid;border-color:#fff #808080 #808080 transparent"></div>
<div class="a" style="left:1233px;top:222px;width:31px;height:20px;border:1px solid;border-color:#fff #808080 #808080 transparent"></div>
<div class="a" style="left:1233px;top:241px;width:31px;height:20px;border:1px solid;border-color:#fff #808080 #808080 transparent"></div>
<div class="a" style="left:1233px;top:260px;width:31px;height:20px;border:1px solid;border-color:#fff #808080 #808080 transparent"></div>
<div class="a" style="left:1233px;top:279px;width:31px;height:20px;border:1px solid;border-color:#fff #808080 #808080 transparent"></div>
<div class="a" style="left:1102px;top:308px;width:165px;height:54px;border:1px solid;border-color:#707070 #fff #fff #707070;box-shadow:inset -1px -1px #707070,inset 1px 1px #fff"></div>
<div class="a" style="left:1233px;top:312px;width:31px;height:16px;background:#b8b8b8;border:1px solid #000;border-left:none"></div>
<div class="a" style="left:1233px;top:334px;width:7px;height:17px;background:#f0f0f0;border:1px solid #808080;border-left:none"></div>
<div class="a" style="left:1245px;top:334px;width:17px;height:17px;background:#900838;border:1px solid #606060;box-shadow:1px 1px #fff"></div>
<!-- render dialog -->
<div class="a" style="left:854px;top:105px;width:379px;height:253px;background:#c8c8c8;border:1px solid;border-color:#d4d0c8 #404040 #404040 #d4d0c8;box-shadow:inset 1px 1px #fff,inset -1px -1px #808080"></div>
<div class="a" style="left:858px;top:109px;width:371px;height:18px;background:linear-gradient(to right,#0a246a,#a6caf0)"></div>
<svg style="left:859px;top:110px" width="17" height="16"><rect width="17" height="16" fill="url(#lg3)"/><path d="M13 3 A6.5 6.5 0 1 0 14 10" fill="none" stroke="#f0f8ff" stroke-width="2"/><path d="M11.5 4.5 L14.5 2" stroke="#f0f8ff" stroke-width="1.5"/><path d="M5 10 Q6 5.5 10 6.5 Q12.5 7.5 10.5 10.5 Q8.5 12 7 10.5" fill="none" stroke="#f0f8ff" stroke-width="1.4"/></svg>
<div class="t" style="left:878px;top:111px;color:#fff;font-weight:bold;font-size:13px;line-height:13px">渲染 - 第二场景0000.tga</div>
<div class="btn" style="left:1212px;top:111px;width:16px;height:14px"><svg style="left:3px;top:2px" width="9" height="8"><path d="M0.5 0.5 L8 7.5 M8 0.5 L0.5 7.5" stroke="#000" stroke-width="1.6"/></svg></div>
<div class="t" style="left:870px;top:143px">全部动画:</div>
<div class="btnm" style="left:1094px;top:133px;width:56px;height:21px"><div class="t" style="left:15px;top:4px;color:#808080;text-shadow:1px 1px #fff">暂停</div></div>
<div class="btnm" style="left:1160px;top:133px;width:57px;height:21px"><div class="t" style="left:15px;top:4px">取消</div></div>
<div class="a" style="left:870px;top:160px;width:348px;height:15px;background:#d6d2ca;border:1px solid;border-color:#808080 #fff #fff #808080"></div>
<div class="t" style="left:870px;top:181px">当前任务:</div>
<div class="t m" style="left:943px;top:181px;font-size:11px;letter-spacing:-.5px">23.9%</div>
<div class="t" style="left:986px;top:181px">正在渲染</div>
<div class="a" style="left:870px;top:197px;width:348px;height:15px;background:#d6d2ca;border:1px solid;border-color:#808080 #fff #fff #808080"></div>
<div class="a" style="left:872px;top:199px;width:79px;height:11px;background:repeating-linear-gradient(to right,#0a246a 0,#0a246a 7px,transparent 7px,transparent 9px)"></div>
<div class="a" style="left:870px;top:218px;width:348px;height:116px;border:1px solid;border-color:#808080 #fff #fff #808080"></div>
<div class="a" style="left:1213px;top:220px;width:4px;height:113px;background:#000"></div>
<div class="a" style="left:874px;top:231px;width:334px;height:103px;border-left:1px solid #fff;border-right:1px solid #fff;box-shadow:inset 1px 0 #808080"></div>
<div class="a" style="left:877px;top:223px;width:329px;height:16px;background:#b8b8b8;border:1px solid #000"></div>
<div class="t" style="left:883px;top:225px">-</div>
<div class="t" style="left:1016px;top:225px">公用参数</div>
<div class="a" style="left:877px;top:247px;width:329px;height:60px;border:1px solid;border-color:#808080 #fff #fff #808080;box-shadow:inset 1px 1px #fff,1px 1px #808080 inset"></div>
<div class="t" style="left:884px;top:241px;background:#c8c8c8;padding:0 2px">渲染进度:</div>
<div class="t" style="left:887px;top:257px">帧编号</div>
<div class="t" style="left:937px;top:256px;font-size:15px;line-height:15px;font-family:'Liberation Serif',serif">0</div>
<div class="t" style="left:905px;top:274px;font-weight:bold;font-family:'Liberation Serif',serif;font-size:12px">1 &nbsp;/ &nbsp;101</div>
<div class="t" style="left:1001px;top:272px">总数</div>
<div class="t" style="left:887px;top:290px">过程编号 <b style="font-family:'Liberation Serif',serif">1/1</b></div>
<div class="t" style="left:1051px;top:257px">上一帧时间:</div>
<div class="t" style="left:1063px;top:275px">已用时间:</div>
<div class="t" style="left:1063px;top:290px">剩余时间:</div>
<div class="t" style="left:1127px;top:257px;font-weight:bold;letter-spacing:.5px">0:00:00</div>
<div class="t" style="left:1127px;top:275px;font-weight:bold;letter-spacing:.5px">0:00:00</div>
<div class="t" style="left:1121px;top:290px;font-weight:bold;letter-spacing:.5px">??:??:??</div>
<div class="a" style="left:883px;top:317px;width:318px;height:17px;border:1px solid;border-color:#808080 #fff transparent #808080;box-shadow:inset 1px 1px #fff"></div>
<div class="t" style="left:890px;top:311px;background:#c8c8c8;padding:0 2px">渲染设置:</div>
<div class="a" style="left:871px;top:329px;width:342px;height:5px;overflow:hidden"><div class="t" style="left:90px;top:1px;font-weight:bold">视口 &nbsp;Camera01</div><div class="t" style="left:236px;top:1px;font-weight:bold">宽度 &nbsp;500</div></div>
<!-- camera window -->
<div class="a" style="left:28px;top:103px;width:742px;height:651px;background:#c8c8c8;border:1px solid;border-color:#d4d0c8 #404040 #404040 #d4d0c8;box-shadow:inset 1px 1px #fff,inset -1px -1px #808080"></div>
<div class="a" style="left:31px;top:107px;width:736px;height:18px;background:linear-gradient(to right,#808080,#c0c0c0)"></div>
<svg style="left:31px;top:108px" width="18" height="16"><rect width="18" height="16" fill="url(#lg3)"/><path d="M13.5 3 A6.5 6.5 0 1 0 14.5 10" fill="none" stroke="#f0f8ff" stroke-width="2"/><path d="M12 4.5 L15 2" stroke="#f0f8ff" stroke-width="1.5"/><path d="M5.5 10 Q6.5 5.5 10.5 6.5 Q13 7.5 11 10.5 Q9 12 7.5 10.5" fill="none" stroke="#f0f8ff" stroke-width="1.4"/></svg>
<div class="t" style="left:51px;top:109px;color:#d4d0c8;font-weight:bold;font-size:13px;line-height:13px">Camera01, 帧 0 (1:1)</div>
<div class="btn" style="left:715px;top:109px;width:15px;height:14px"><div class="a" style="left:3px;top:8px;width:6px;height:2px;background:#000"></div></div>
<div class="btn" style="left:731px;top:109px;width:16px;height:14px"><div class="a" style="left:3px;top:2px;width:9px;height:8px;border:1px solid #000;border-top-width:2px"></div></div>
<div class="btn" style="left:749px;top:109px;width:16px;height:14px"><svg style="left:3px;top:2px" width="9" height="8"><path d="M0.5 0.5 L8 7.5 M8 0.5 L0.5 7.5" stroke="#000" stroke-width="1.6"/></svg></div>
<!-- cam toolbar -->
<svg style="left:41px;top:135px" width="14" height="14"><rect x="0.5" y="0.5" width="13" height="13" fill="#000"/><rect x="2.5" y="1.5" width="9" height="6" fill="#f0f000"/><rect x="3.5" y="9.5" width="7" height="4" fill="#fff"/><rect x="6" y="10" width="3" height="3" fill="#000"/></svg>
<svg style="left:62px;top:135px" width="17" height="14"><g fill="#fff" stroke="#000" stroke-width="1"><circle cx="4.5" cy="3" r="2.5"/><circle cx="12" cy="3" r="2.5"/><path d="M1 11 l1.5 -5 h4 l1.5 5 M8.5 11 l1.5 -5 h4 l1.5 5"/><path d="M2 13 l1 -3 M7 13 l-1 -3 M9 13 l1 -3 M15 13 l-1 -3"/></g></svg>
<div class="a" style="left:87px;top:131px;width:22px;height:22px;background:#fff;border:1px solid;border-color:#808080 #fff #fff #808080;box-shadow:inset 1px 1px #404040"></div>
<div class="a" style="left:93px;top:137px;width:10px;height:10px;border-radius:50%;background:#f00"></div>
<div class="a" style="left:109px;top:131px;width:21px;height:22px;background:#fff;border:1px solid;border-color:#808080 #fff #fff #808080;box-shadow:inset 1px 1px #404040"></div>
<div class="a" style="left:115px;top:137px;width:10px;height:10px;border-radius:50%;background:#008000"></div>
<div class="a" style="left:131px;top:131px;width:21px;height:22px;background:#fff;border:1px solid;border-color:#808080 #fff #fff #808080;box-shadow:inset 1px 1px #404040"></div>
<div class="a" style="left:137px;top:137px;width:10px;height:10px;border-radius:50%;background:#0000f0"></div>
<svg style="left:158px;top:137px" width="11" height="11"><circle cx="5.5" cy="5.5" r="4.8" fill="#fff" stroke="#000"/><path d="M5.5 0.7 A4.8 4.8 0 0 0 5.5 10.3Z" fill="#000"/></svg>
<div class="a" style="left:180px;top:137px;width:10px;height:10px;border-radius:50%;background:#8c8c8c"></div>
<svg style="left:206px;top:135px" width="15" height="14"><path d="M1 1 L14 13 M14 1 L1 13" stroke="#000" stroke-width="2"/></svg>
<div class="dd" style="left:231px;top:132px;width:106px;height:20px"><div class="t m" style="left:3px;top:3px;font-size:12px;letter-spacing:-0.4px">RGB Alpha</div></div>
<div class="dda" style="left:320px;top:133px;height:17px"></div>
<div class="a" style="left:344px;top:130px;width:23px;height:23px;background:#fff;border:1px solid #000;box-shadow:1px 1px #fff"></div>
<div class="a" style="left:31px;top:157px;width:736px;height:1px;background:#000"></div>
<div class="a" style="left:31px;top:158px;width:736px;height:592px;background:#808080"></div>
<div class="a" style="left:38px;top:165px;width:722px;height:578px;background:#000;overflow:hidden">
<svg style="left:-38px;top:-165px" width="800" height="760">
<defs>
<pattern id="st" width="4" height="2" patternUnits="userSpaceOnUse"><rect width="4" height="1" fill="#3a7ee8"/></pattern>
<pattern id="st2" width="4" height="2" patternUnits="userSpaceOnUse"><rect width="4" height="1" fill="#3a90d8"/></pattern>
<pattern id="st3" width="4" height="2" patternUnits="userSpaceOnUse"><rect width="4" height="1" fill="#58b0d8"/></pattern>
<linearGradient id="bb" x1="0" y1="1" x2="1" y2="0"><stop offset="0" stop-color="#2660b4"/><stop offset="1" stop-color="#1a4690"/></linearGradient>
<radialGradient id="orb" cx=".45" cy=".4" r=".6"><stop offset="0" stop-color="#b0dcf6"/><stop offset=".6" stop-color="#8cc4e8"/><stop offset="1" stop-color="#5a9ccc"/></radialGradient>
<linearGradient id="gl" x1="0" y1="0" x2="1" y2="0"><stop offset="0" stop-color="#2870b0"/><stop offset="1" stop-color="#3c80b8"/></linearGradient>
</defs>
<polygon points="273,358 315.8,340 320,352 319,358" fill="#0f2746"/>
<polygon points="319.7,353.5 336.1,347.2 341.6,358 319.7,358" fill="#38c8f8"/><polygon points="323,356 330,352 332,358 323,358" fill="#1040e0"/>
<polygon points="75,448 231,377 231,398 92,455" fill="url(#bb)"/>
<polygon points="75,448 90,441 96,452 80,455" fill="#2f78e0"/>
<polygon points="133,468.5 231,420.6 231,434 133,481" fill="#1f4e9c"/>
<polygon points="136,500 148,482 231,440 231,550 136,550" fill="url(#gl)"/>

<clipPath id="oc"><rect x="136" y="430" width="95" height="120"/></clipPath><circle cx="243" cy="520" r="62" fill="url(#orb)" clip-path="url(#oc)"/>
<path d="M148,482 L231,441" stroke="#a0d0f0" stroke-width="1.2"/>
<polygon points="77.6,455 105.2,455 135,500 135,566 126,563" fill="url(#st)"/>
<polygon points="68,500 86,500 194,706 176,706" fill="url(#st)"/>
<polygon points="105,470 135,458 135,492 114,490" fill="url(#st)"/>
<polygon points="135,502 183,502 183,550 135,550" fill="#000"/><polygon points="135,502 183,502 183,550 135,550" fill="url(#st3)" opacity=".75"/>
<polygon points="152.5,600 231,600 231,742 226,742" fill="url(#st2)"/>
<polygon points="180,640 231,640 231,700 205,690" fill="url(#st3)"/>
<g stroke="#e8e8e8" stroke-width="1" fill="none"><path d="M135.5,508 v-5.5 h5 M177,502.5 h5.5 v5.5 M182.5,544 v5.5 h-5.5 M140.5,549.5 h-5 v-5.5"/></g>
</svg>
</div>
<!-- time slider -->
<div class="a" style="left:38px;top:900px;width:1061px;height:45px;background:#c8c8c8"></div>
<div class="btnm" style="left:652px;top:900px;width:15px;height:17px"><svg style="left:3px;top:3px" width="8" height="10"><path d="M6 0.5 L1 5 L6 9.5" fill="none" stroke="#000" stroke-width="1.1"/></svg></div>
<div class="a" style="left:667px;top:900px;width:125px;height:17px;background:#c8c8c8;border:1px solid;border-color:#fff #000 #000 #fff;box-shadow:inset -1px -1px #808080"><div class="t m" style="left:36px;top:2px;font-size:12px;letter-spacing:-.3px">68 / 100</div></div>
<div class="btnm" style="left:792px;top:900px;width:15px;height:17px"><svg style="left:4px;top:3px" width="8" height="10"><path d="M1 0.5 L6 5 L1 9.5" fill="none" stroke="#000" stroke-width="1.1"/></svg></div>
<div class="a" style="left:38px;top:918px;width:1060px;height:1px;background:#909090"></div>
<div class="a" style="left:38px;top:919px;width:1060px;height:1px;background:#ececec"></div>
<div class="a" style="left:93.5px;top:920px;width:1px;height:24px;background:#808080"></div><div class="a" style="left:103.0px;top:920px;width:1px;height:10px;background:#808080"></div><div class="a" style="left:112.5px;top:920px;width:1px;height:10px;background:#808080"></div><div class="a" style="left:121.9px;top:920px;width:1px;height:10px;background:#808080"></div><div class="a" style="left:131.4px;top:920px;width:1px;height:10px;background:#808080"></div><div class="a" style="left:140.9px;top:920px;width:1px;height:10px;background:#808080"></div><div class="a" style="left:150.4px;top:920px;width:1px;height:10px;background:#808080"></div><div class="a" style="left:159.9px;top:920px;width:1px;height:10px;background:#808080"></div><div class="a" style="left:169.3px;top:920px;width:1px;height:10px;background:#808080"></div><div class="a" style="left:178.8px;top:920px;width:1px;height:10px;background:#808080"></div><div class="a" style="left:188.3px;top:920px;width:1px;height:24px;background:#808080"></div><div class="a" style="left:197.8px;top:920px;width:1px;height:10px;background:#808080"></div><div class="a" style="left:207.3px;top:920px;width:1px;height:10px;background:#808080"></div><div class="a" style="left:216.7px;top:920px;width:1px;height:10px;background:#808080"></div><div class="a" style="left:226.2px;top:920px;width:1px;height:10px;background:#808080"></div><div class="a" style="left:235.7px;top:920px;width:1px;height:10px;background:#808080"></div><div class="a" style="left:245.2px;top:920px;width:1px;height:10px;background:#808080"></div><div class="a" style="left:254.7px;top:920px;width:1px;height:10px;background:#808080"></div><div class="a" style="left:264.1px;top:920px;width:1px;height:10px;background:#808080"></div><div class="a" style="left:273.6px;top:920px;width:1px;height:10px;background:#808080"></div><div class="a" style="left:283.1px;top:920px;width:1px;height:24px;background:#808080"></div><div class="a" style="left:292.6px;top:920px;width:1px;height:10px;background:#808080"></div><div class="a" style="left:302.1px;top:920px;width:1px;height:10px;background:#808080"></div><div class="a" style="left:311.5px;top:920px;width:1px;height:10px;background:#808080"></div><div class="a" style="left:321.0px;top:920px;width:1px;height:10px;background:#808080"></div><div class="a" style="left:330.5px;top:920px;width:1px;height:10px;background:#808080"></div><div class="a" style="left:340.0px;top:920px;width:1px;height:10px;background:#808080"></div><div class="a" style="left:349.5px;top:920px;width:1px;height:10px;background:#808080"></div><div class="a" style="left:358.9px;top:920px;width:1px;height:10px;background:#808080"></div><div class="a" style="left:368.4px;top:920px;width:1px;height:10px;background:#808080"></div><div class="a" style="left:377.9px;top:920px;width:1px;height:24px;background:#808080"></div><div class="a" style="left:387.4px;top:920px;width:1px;height:10px;background:#808080"></div><div class="a" style="left:396.9px;top:920px;width:1px;height:10px;background:#808080"></div><div class="a" style="left:406.3px;top:920px;width:1px;height:10px;background:#808080"></div><div class="a" style="left:415.8px;top:920px;width:1px;height:10px;background:#808080"></div><div class="a" style="left:425.3px;top:920px;width:1px;height:10px;background:#808080"></div><div class="a" style="left:434.8px;top:920px;width:1px;height:10px;background:#808080"></div><div class="a" style="left:444.3px;top:920px;width:1px;height:10px;background:#808080"></div><div class="a" style="left:453.7px;top:920px;width:1px;height:10px;background:#808080"></div><div class="a" style="left:463.2px;top:920px;width:1px;height:10px;background:#808080"></div><div class="a" style="left:472.7px;top:920px;width:1px;height:24px;background:#808080"></div><div class="a" style="left:482.2px;top:920px;width:1px;height:10px;background:#808080"></div><div class="a" style="left:491.7px;top:920px;width:1px;height:10px;background:#808080"></div><div class="a" style="left:501.1px;top:920px;width:1px;height:10px;background:#808080"></div><div class="a" style="left:510.6px;top:920px;width:1px;height:10px;background:#808080"></div><div class="a" style="left:520.1px;top:920px;width:1px;height:10px;background:#808080"></div><div class="a" style="left:529.6px;top:920px;width:1px;height:10px;background:#808080"></div><div class="a" style="left:539.1px;top:920px;width:1px;height:10px;background:#808080"></div><div class="a" style="left:548.5px;top:920px;width:1px;height:10px;background:#808080"></div><div class="a" style="left:558.0px;top:920px;width:1px;height:10px;background:#808080"></div><div class="a" style="left:567.5px;top:920px;width:1px;height:24px;background:#808080"></div><div class="a" style="left:577.0px;top:920px;width:1px;height:10px;background:#808080"></div><div class="a" style="left:586.5px;top:920px;width:1px;height:10px;background:#808080"></div><div class="a" style="left:595.9px;top:920px;width:1px;height:10px;background:#808080"></div><div class="a" style="left:605.4px;top:920px;width:1px;height:10px;background:#808080"></div><div class="a" style="left:614.9px;top:920px;width:1px;height:10px;background:#808080"></div><div class="a" style="left:624.4px;top:920px;width:1px;height:10px;background:#808080"></div><div class="a" style="left:633.9px;top:920px;width:1px;height:10px;background:#808080"></div><div class="a" style="left:643.3px;top:920px;width:1px;height:10px;background:#808080"></div><div class="a" style="left:652.8px;top:920px;width:1px;height:10px;background:#808080"></div><div class="a" style="left:662.3px;top:920px;width:1px;height:24px;background:#808080"></div><div class="a" style="left:671.8px;top:920px;width:1px;height:10px;background:#808080"></div><div class="a" style="left:681.3px;top:920px;width:1px;height:10px;background:#808080"></div><div class="a" style="left:690.7px;top:920px;width:1px;height:10px;background:#808080"></div><div class="a" style="left:700.2px;top:920px;width:1px;height:10px;background:#808080"></div><div class="a" style="left:709.7px;top:920px;width:1px;height:10px;background:#808080"></div><div class="a" style="left:719.2px;top:920px;width:1px;height:10px;background:#808080"></div><div class="a" style="left:728.7px;top:920px;width:1px;height:10px;background:#808080"></div><div class="a" style="left:738.1px;top:920px;width:1px;height:10px;background:#808080"></div><div class="a" style="left:747.6px;top:920px;width:1px;height:10px;background:#808080"></div><div class="a" style="left:757.1px;top:920px;width:1px;height:24px;background:#808080"></div><div class="a" style="left:766.6px;top:920px;width:1px;height:10px;background:#808080"></div><div class="a" style="left:776.1px;top:920px;width:1px;height:10px;background:#808080"></div><div class="a" style="left:785.5px;top:920px;width:1px;height:10px;background:#808080"></div><div class="a" style="left:795.0px;top:920px;width:1px;height:10px;background:#808080"></div><div class="a" style="left:804.5px;top:920px;width:1px;height:10px;background:#808080"></div><div class="a" style="left:814.0px;top:920px;width:1px;height:10px;background:#808080"></div><div class="a" style="left:823.5px;top:920px;width:1px;height:10px;background:#808080"></div><div class="a" style="left:832.9px;top:920px;width:1px;height:10px;background:#808080"></div><div class="a" style="left:842.4px;top:920px;width:1px;height:10px;background:#808080"></div><div class="a" style="left:851.9px;top:920px;width:1px;height:24px;background:#808080"></div><div class="a" style="left:861.4px;top:920px;width:1px;height:10px;background:#808080"></div><div class="a" style="left:870.9px;top:920px;width:1px;height:10px;background:#808080"></div><div class="a" style="left:880.3px;top:920px;width:1px;height:10px;background:#808080"></div><div class="a" style="left:889.8px;top:920px;width:1px;height:10px;background:#808080"></div><div class="a" style="left:899.3px;top:920px;width:1px;height:10px;background:#808080"></div><div class="a" style="left:908.8px;top:920px;width:1px;height:10px;background:#808080"></div><div class="a" style="left:918.3px;top:920px;width:1px;height:10px;background:#808080"></div><div class="a" style="left:927.7px;top:920px;width:1px;height:10px;background:#808080"></div><div class="a" style="left:937.2px;top:920px;width:1px;height:10px;background:#808080"></div><div class="a" style="left:946.7px;top:920px;width:1px;height:24px;background:#808080"></div><div class="a" style="left:956.2px;top:920px;width:1px;height:10px;background:#808080"></div><div class="a" style="left:965.7px;top:920px;width:1px;height:10px;background:#808080"></div><div class="a" style="left:975.1px;top:920px;width:1px;height:10px;background:#808080"></div><div class="a" style="left:984.6px;top:920px;width:1px;height:10px;background:#808080"></div><div class="a" style="left:994.1px;top:920px;width:1px;height:10px;background:#808080"></div><div class="a" style="left:1003.6px;top:920px;width:1px;height:10px;background:#808080"></div><div class="a" style="left:1013.1px;top:920px;width:1px;height:10px;background:#808080"></div><div class="a" style="left:1022.5px;top:920px;width:1px;height:10px;background:#808080"></div><div class="a" style="left:1032.0px;top:920px;width:1px;height:10px;background:#808080"></div><div class="a" style="left:1041.5px;top:920px;width:1px;height:24px;background:#808080"></div>
<div class="a" style="left:734px;top:919px;width:9px;height:25px;background:#90b4d0;border:1px solid #607890"></div>
<div class="t" style="left:90.5px;top:932px;font-size:11px;line-height:11px;width:6px;text-align:center">0</div>
<div class="t" style="left:182.3px;top:932px;font-size:11px;line-height:11px;width:12px;text-align:center">10</div>
<div class="t" style="left:277.1px;top:932px;font-size:11px;line-height:11px;width:12px;text-align:center">20</div>
<div class="t" style="left:371.9px;top:932px;font-size:11px;line-height:11px;width:12px;text-align:center">30</div>
<div class="t" style="left:466.7px;top:932px;font-size:11px;line-height:11px;width:12px;text-align:center">40</div>
<div class="t" style="left:561.5px;top:932px;font-size:11px;line-height:11px;width:12px;text-align:center">50</div>
<div class="t" style="left:656.3px;top:932px;font-size:11px;line-height:11px;width:12px;text-align:center">60</div>
<div class="t" style="left:751.1px;top:932px;font-size:11px;line-height:11px;width:12px;text-align:center">70</div>
<div class="t" style="left:845.9px;top:932px;font-size:11px;line-height:11px;width:12px;text-align:center">80</div>
<div class="t" style="left:940.7px;top:932px;font-size:11px;line-height:11px;width:12px;text-align:center">90</div>
<div class="t" style="left:1032.5px;top:932px;font-size:11px;line-height:11px;width:18px;text-align:center">100</div>
<svg style="left:52px;top:924px" width="17" height="16"><rect x="0.5" y="0.5" width="16" height="5" fill="none" stroke="#000"/><path d="M3 3 q2 -2 4 0 t4 0" fill="none" stroke="#000" stroke-width=".8"/><path d="M4 13 v-5 M2 10 l2 -2 l2 2 M13 8 v5 M11 11 l2 2 l2 -2" fill="none" stroke="#000"/><rect x="0.5" y="13.5" width="16" height="2" fill="#000"/></svg>
<div class="a" style="left:0;top:944px;width:1278px;height:1px;background:#808080"></div>
<div class="a" style="left:0;top:945px;width:1278px;height:51px;background:#c8c8c8"></div>
<div class="a" style="left:1px;top:948px;width:96px;height:21px;background:#dcc4c4;border:1px solid;border-color:#404040 #fff #fff #404040"></div>
<div class="a" style="left:1px;top:971px;width:96px;height:21px;background:#fff;border:1px solid;border-color:#404040 #fff #fff #404040"></div>
<div class="a" style="left:101px;top:946px;width:2px;height:48px;border-left:1px solid #808080;border-right:1px solid #fff"></div>
<div class="a" style="left:106px;top:949px;width:327px;height:21px;background:#c8c8c8;border:1px solid;border-color:#808080 #fff #fff #808080"></div>
<div class="t" style="left:112px;top:953px">未选定任何对象</div>
<div class="a" style="left:106px;top:974px;width:629px;height:20px;background:#c8c8c8;border:1px solid;border-color:#808080 #fff #fff #808080"></div>
<div class="t" style="left:112px;top:978px">渲染时间 &nbsp;&nbsp;0:00:00</div>
<svg style="left:442px;top:952px" width="10" height="13"><path d="M2 6 V4 Q2 1 5 1 Q8 1 8 4 V6" fill="none" stroke="#000" stroke-width="1.3"/><rect x="1" y="6" width="8" height="7" fill="#000"/><path d="M2 8h6M2 10h6" stroke="#888" stroke-width=".7"/></svg>
<svg style="left:466px;top:951px" width="17" height="16"><rect x="0.5" y="0.5" width="15" height="15" fill="none" stroke="#000"/><path d="M8 1v14M1 8h14" stroke="#000" stroke-width=".8"/><circle cx="8" cy="8" r="2.5" fill="#000"/><circle cx="8" cy="8" r="1" fill="#c8c8c8"/></svg>
<div class="t m" style="left:489px;top:953px;font-size:11px">X:</div>
<div class="dd" style="left:500px;top:949px;width:58px;height:21px;background:#dcdcdc"><div class="t m" style="left:3px;top:4px;color:#909090;font-size:11px;letter-spacing:-.5px">5.014</div></div>
<div class="t m" style="left:571px;top:953px;font-size:11px">Y:</div>
<div class="dd" style="left:582px;top:949px;width:58px;height:21px;background:#dcdcdc"><div class="t m" style="left:2px;top:4px;color:#909090;font-size:11px;letter-spacing:-.9px">-928.385</div></div>
<div class="t m" style="left:654px;top:953px;font-size:11px">Z:</div>
<div class="dd" style="left:665px;top:949px;width:57px;height:21px;background:#dcdcdc"><div class="t m" style="left:3px;top:4px;color:#909090;font-size:11px;letter-spacing:-.5px">0.0</div></div>
<div class="a" style="left:431px;top:969px;width:135px;height:25px;background:#d4d0c8;border:1px solid;border-color:#fff #404040 #404040 #fff"></div>
<div class="btn" style="left:433px;top:971px;width:19px;height:21px"><svg style="left:2px;top:3px" width="15" height="14"><path d="M1 2 q3 -2 6 0 v5 q-3 -2 -6 0z" fill="#e02020"/><path d="M8 2 q3 -2 6 0 v5 q-3 -2 -6 0z" fill="#20a020"/><path d="M1 8 q3 -2 6 0 v5 q-3 -2 -6 0z" fill="#2040e0"/><path d="M8 8 q3 -2 6 0 v5 q-3 -2 -6 0z" fill="#f0d020"/></svg></div>
<div class="btn" style="left:453px;top:971px;width:50px;height:21px"><div class="t" style="left:4px;top:3px;font-size:14px;line-height:14px">五笔型</div></div>
<div class="btn" style="left:504px;top:971px;width:17px;height:21px"><svg style="left:3px;top:4px" width="11" height="12"><path d="M7 1 A5 5 0 1 0 10 9 A4 4 0 0 1 7 1Z" fill="#000"/></svg></div>
<div class="btn" style="left:522px;top:971px;width:20px;height:21px"><div class="a" style="left:5px;top:9px;width:2px;height:2px;background:#000"></div><div class="a" style="left:11px;top:8px;width:2px;height:4px;background:#000"></div></div>
<div class="btn" style="left:543px;top:971px;width:20px;height:21px"><div class="a" style="left:2px;top:5px;width:14px;height:10px;border:1px solid #606060;background:repeating-linear-gradient(to right,#fff 0,#fff 2px,#909090 2px,#909090 3px)"></div></div>
<div class="a" style="left:736px;top:949px;width:100px;height:21px;border:1px solid;border-color:#808080 #fff #fff #808080"></div>
<div class="t" style="left:742px;top:953px">栅格 = 10.0</div>
<div class="a" style="left:736px;top:974px;width:100px;height:20px;border:1px solid;border-color:#808080 #fff #fff #808080"></div>
<div class="t" style="left:742px;top:977px">添加时间标记</div>
<div class="btnm" style="left:838px;top:948px;width:42px;height:45px"><svg style="left:8px;top:15px" width="25" height="12"><circle cx="5" cy="5.5" r="3.8" fill="none" stroke="#000" stroke-width="2.2"/><path d="M9 5.5 H24 M17 5.5v4 M20 5.5v4 M23 5.5v3" stroke="#000" stroke-width="2.2"/></svg></div>
<div class="btnm" style="left:882px;top:948px;width:64px;height:22px"><div class="t" style="left:2px;top:4px">自动关键点</div></div>
<div class="btnm" style="left:882px;top:970px;width:64px;height:22px"><div class="t" style="left:2px;top:4px">设置关键点</div></div>
<div class="dd" style="left:949px;top:948px;width:102px;height:19px"><div class="t" style="left:3px;top:3px">选定对象</div></div>
<div class="dda" style="left:1033px;top:949px;height:17px"></div>
<div class="btnm" style="left:949px;top:970px;width:102px;height:22px"><div class="t" style="left:6px;top:4px">关键点过滤器...</div></div>
<div class="a" style="left:1096px;top:943px;width:182px;height:1px;background:#808080"></div>
<svg style="left:1056px;top:951px" width="122" height="16"><path d="M3 3v10h2V3z M13 3 L6 8 L13 13z M20 3 L13 8 L20 13z" fill="#000"/><path d="M31 8 L37 3 V13z M38 3h2v10h-2z M41 3h2v10h-2z" fill="#000"/><rect x="52.5" y="0.5" width="15" height="15" fill="none" stroke="#000" stroke-width="1.6"/><path d="M57 4 L63 8 L57 12z" fill="#000"/><path d="M75 3h2v10h-2z M78 3h2v10h-2z M81 3 L87 8 L81 13z" fill="#000"/><path d="M101 3 L108 8 L101 13z M108 3 L115 8 L108 13z M115 3h2v10h-2z" fill="#000"/></svg>
<div class="a" style="left:1080px;top:950px;width:2px;height:17px;border-left:1px solid #808080;border-right:1px solid #fff"></div>
<div class="a" style="left:1152px;top:950px;width:2px;height:17px;border-left:1px solid #808080;border-right:1px solid #fff"></div>
<div class="a" style="left:1181px;top:950px;width:2px;height:17px;border-left:1px solid #808080;border-right:1px solid #fff"></div>
<div class="a" style="left:1080px;top:972px;width:2px;height:19px;border-left:1px solid #808080;border-right:1px solid #fff"></div>
<div class="a" style="left:1181px;top:972px;width:2px;height:19px;border-left:1px solid #808080;border-right:1px solid #fff"></div>
<svg style="left:1061px;top:975px" width="14" height="10"><path d="M1 1v8h1V1z M12 1v8h1V1z M6 1 L2 5 L6 9z M8 1 L12 5 L8 9z" fill="#000"/></svg>
<div class="dd" style="left:1082px;top:972px;width:64px;height:20px"><div class="t" style="left:2px;top:3px">68</div></div>
<div class="a" style="left:1147px;top:972px;width:10px;height:19px"><svg width="10" height="19"><path d="M2 7 L5 3 L8 7z M2 12 L5 16 L8 12z" fill="#000"/><path d="M0 9.5h10" stroke="#808080"/></svg></div>
<svg style="left:1163px;top:973px" width="16" height="16"><rect x="0.5" y="1.5" width="11" height="11" fill="none" stroke="#000"/><path d="M1 4h10" stroke="#000"/><circle cx="10" cy="11" r="4.5" fill="#fff" stroke="#c02020"/><path d="M10 8v3h2" stroke="#c02020" fill="none"/></svg>
<svg style="left:1185px;top:949px" width="90" height="42"><path d="M1 9 H17 M9 2 V16 M6 12 L9 16 L12 12" fill="none" stroke="#000" stroke-width="1.2"/><path d="M9 9 V16" stroke="#c02020" stroke-width="1.5"/><path d="M25 4 L32 1 L39 4 L37 14 L32 17 L27 14z" fill="#e0e0f0" stroke="#2020a0" stroke-width="1.3"/><path d="M32 7 L38 4 L37 14 L32 17z" fill="#7070a0"/><path d="M48 6 A6 6 0 1 0 59 6 M53 2 v4" fill="none" stroke="#000" stroke-width="1.5"/><path d="M53 1v4" stroke="#c02020" stroke-width="1.5"/><rect x="71.5" y="1.5" width="14" height="10" fill="none" stroke="#c03030"/><path d="M78 1.5v10M71.5 6.5h14" stroke="#c03030"/><rect x="69.5" y="7.5" width="9" height="9" fill="#fff" stroke="#2020a0" stroke-width="1.3"/><path d="M2 24 L17 31 L2 38z" fill="#b0b0b0" stroke="#000" stroke-width="1.2"/><path d="M27 40 q-5 -6 -2 -10 l2 2 v-7 l2 0 v6 v-8 l2 0 v8 v-7 l2 0 v7 v-6 l2 0 v8 q2 -3 3 0 q-2 6 -5 8z" fill="#fff" stroke="#000" stroke-width="1"/><ellipse cx="54" cy="32" rx="8" ry="3" fill="none" stroke="#d02020" stroke-width="1.5"/><circle cx="54" cy="31" r="5" fill="#e8e8f0" stroke="#2020a0"/><rect x="70.5" y="23.5" width="11" height="11" fill="none" stroke="#2020a0" stroke-width="1.3"/><rect x="76.5" y="29.5" width="9" height="9" fill="none" stroke="#000" stroke-width="1.2"/><path d="M73 26 L79 32" stroke="#000"/></svg>
<div class="a" style="left:0;top:996px;width:1278px;height:26px;background:#d4d0c8;border-top:1px solid #fff;box-shadow:0 -1px #d4d0c8"></div>
<div class="btn" style="left:1px;top:999px;width:50px;height:22px"><svg style="left:3px;top:3px" width="16" height="14"><path d="M1 3 q3 -2 6 0 v4 q-3 -2 -6 0z" fill="#e02020"/><path d="M8 3 q3 -2 6 0 v4 q-3 -2 -6 0z" fill="#20a020"/><path d="M1 8 q3 -2 6 0 v4 q-3 -2 -6 0z" fill="#2040e0"/><path d="M8 8 q3 -2 6 0 v4 q-3 -2 -6 0z" fill="#f0d020"/><path d="M0 2h15M0 13h15" stroke="#000" stroke-width=".5"/></svg><div class="t" style="left:21px;top:4px;font-size:12px">开始</div></div>
<div class="a" style="left:55px;top:999px;width:2px;height:21px;border-left:1px solid #808080;border-right:1px solid #fff"></div>
<div class="a" style="left:58px;top:1000px;width:3px;height:19px;border-left:1px solid #fff;border-right:1px solid #808080"></div>
<svg style="left:67px;top:1001px" width="100" height="18"><defs><linearGradient id="ie" x1="0" y1="0" x2="1" y2="1"><stop offset="0" stop-color="#80d0ff"/><stop offset="1" stop-color="#1060c0"/></linearGradient></defs><text x="1" y="15" font-size="17" font-weight="bold" fill="url(#ie)" font-family="Liberation Serif">e</text><path d="M0 14 Q4 2 16 3" fill="none" stroke="#40a0e0" stroke-width="1.3"/><rect x="24.5" y="2.5" width="12" height="13" fill="#e8f0f0" stroke="#204060" stroke-width="1.2"/><rect x="26" y="8" width="6" height="6" fill="#fff" stroke="#404040" stroke-width=".8"/><path d="M30 10 L37 1" stroke="#e0a020" stroke-width="1.6"/><ellipse cx="54" cy="8" rx="5" ry="6.5" fill="#000"/><ellipse cx="54" cy="11" rx="3.2" ry="4" fill="#fff"/><path d="M49 11 h10 l-1 3 h-8z" fill="#e02020"/><path d="M50 16 h3 M55 16 h3" stroke="#f0a000" stroke-width="2"/><circle cx="77" cy="9" r="7" fill="#30a030"/><path d="M77 2 A7 7 0 0 1 84 9 L77 9z" fill="#f0c020"/><path d="M70 9 A7 7 0 0 0 77 16 L77 9z" fill="#2060d0"/><path d="M77 16 A7 7 0 0 0 84 9 L77 9z" fill="#e04020"/><circle cx="77" cy="9" r="4.5" fill="#fff"/><path d="M75.5 6.5 L80 9 L75.5 11.5z" fill="#203060"/><text x="89" y="9" font-size="13" font-weight="bold" font-family="Liberation Sans">»</text></svg>
<div class="a" style="left:173px;top:999px;width:2px;height:21px;border-left:1px solid #808080;border-right:1px solid #fff"></div>
<div class="a" style="left:176px;top:1000px;width:3px;height:19px;border-left:1px solid #fff;border-right:1px solid #808080"></div>
<div class="btn" style="left:184px;top:998px;width:160px;height:22px"><svg style="left:3px;top:3px" width="16" height="16"><rect x="1.5" y="0.5" width="13" height="15" fill="#fff" stroke="#606060"/><circle cx="7" cy="9" r="5" fill="#2a8ae0"/><circle cx="7" cy="9" r="2.3" fill="#fff"/></svg><div class="t" style="left:21px;top:4px">电白同乡论坛 -&gt; 发表...</div></div>
<div class="btn" style="left:347px;top:998px;width:160px;height:22px"><svg style="left:3px;top:3px" width="16" height="16"><rect x="0.5" y="0.5" width="15" height="15" fill="#f0a040" stroke="#805020"/><path d="M3 13 L13 3" stroke="#fff" stroke-width="2"/></svg><div class="t" style="left:21px;top:4px">3.jpg [2:3] : ACD Photo E...</div></div>
<div class="a" style="left:509px;top:998px;width:160px;height:22px;background:repeating-conic-gradient(#fff 0 25%,#d4d0c8 0 50%) 0 0/2px 2px;border:1px solid;border-color:#404040 #fff #fff #404040;box-shadow:inset 1px 1px #808080"><svg style="left:4px;top:3px" width="16" height="16"><rect width="16" height="16" fill="#1a4a8a"/><circle cx="8" cy="8" r="5.5" fill="none" stroke="#e8f4ff" stroke-width="2"/></svg><div class="t" style="left:22px;top:5px">第二场景.max - 3ds max...</div></div>
<div class="a" style="left:1075px;top:999px;width:201px;height:22px;border:1px solid;border-color:#808080 #fff #fff #808080"></div>
<svg style="left:1078px;top:1002px" width="150" height="16"><path d="M2 8 L9 1 L15 6 L8 14z" fill="#f0e040" stroke="#404000" stroke-width=".8"/><circle cx="26" cy="8" r="5.5" fill="none" stroke="#20c0e0" stroke-width="2"/><path d="M26 8 l3 4" stroke="#20a0c0" stroke-width="1.5"/><path d="M38 6h3l4 -4v12l-4 -4h-3z" fill="#f0e060" stroke="#404000" stroke-width=".7"/><path d="M47 4 l3 -2 M47 8 h3 M47 12 l3 2" stroke="#808080"/><rect x="55" y="0" width="16" height="16" fill="#000080"/><circle cx="63" cy="8" r="2" fill="#f0e040"/><path d="M59 4 q-3 4 0 8 M67 4 q3 4 0 8" fill="none" stroke="#f0e040"/><circle cx="81" cy="7" r="6.5" fill="#2050a0"/><path d="M76 5 q4 -4 9 0" fill="#40a040"/><circle cx="85" cy="11" r="4" fill="#e02020"/><path d="M83 9l4 4M87 9l-4 4" stroke="#fff" stroke-width="1.2"/><rect x="95" y="4" width="8" height="7" fill="#fff" stroke="#000"/><rect x="99" y="1" width="8" height="7" fill="#fff" stroke="#000"/><path d="M93 14h14" stroke="#000" stroke-width="2"/><ellipse cx="117" cy="5" rx="4" ry="4.5" fill="#000"/><rect x="110" y="7" width="14" height="9" fill="#f0e040" stroke="#605000" stroke-width=".8"/><path d="M112 10h10M112 13h10" stroke="#605000" stroke-width=".8"/><rect x="127" y="0" width="16" height="16" fill="#000080"/><text x="128" y="12" font-size="10" fill="#fff" font-family="Liberation Sans">CH</text></svg>
<div class="t" style="left:1238px;top:1005px">6:35</div></body></html>
